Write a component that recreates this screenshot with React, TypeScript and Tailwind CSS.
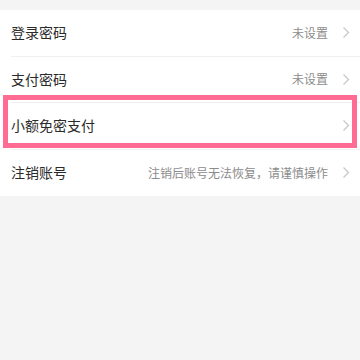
import React from "react";

const rows = [
  { label: "登录密码", value: "未设置" },
  { label: "支付密码", value: "未设置" },
  { label: "小额免密支付", value: "" },
  { label: "注销账号", value: "注销后账号无法恢复，请谨慎操作" },
];

const Chevron: React.FC = () => (
  <svg width="8" height="13" viewBox="0 0 8 13" className="ml-[14px] shrink-0">
    <path d="M1.5 1.5 L6.5 6.5 L1.5 11.5" fill="none" stroke="#c8c8c8" strokeWidth="1.3" />
  </svg>
);

const App: React.FC = () => {
  return (
    <div
      className="relative w-[360px] h-[360px] bg-[#f4f4f4] pt-[10px]"
      style={{ fontFamily: '"Noto Sans CJK SC", "Noto Sans", sans-serif' }}
    >
      <div className="bg-white">
        {rows.map((r, i) => (
          <div key={r.label} className="pl-[11px]">
            <div
              className={`h-[46.5px] flex items-center pr-[10px] ${
                i < rows.length - 1 ? "border-b border-[#f0f0f0]" : ""
              }`}
            >
              <span className="text-[14px] text-[#2a2a2a] flex-1">{r.label}</span>
              {r.value && <span className="text-[12px] text-[#8c8c8c]">{r.value}</span>}
              <Chevron />
            </div>
          </div>
        ))}
      </div>
      {/* highlight box */}
      <div className="absolute left-[3px] top-[95px] w-[354px] h-[53px] border-[5px] border-[#ff6b93]" />
    </div>
  );
};

export default App;
